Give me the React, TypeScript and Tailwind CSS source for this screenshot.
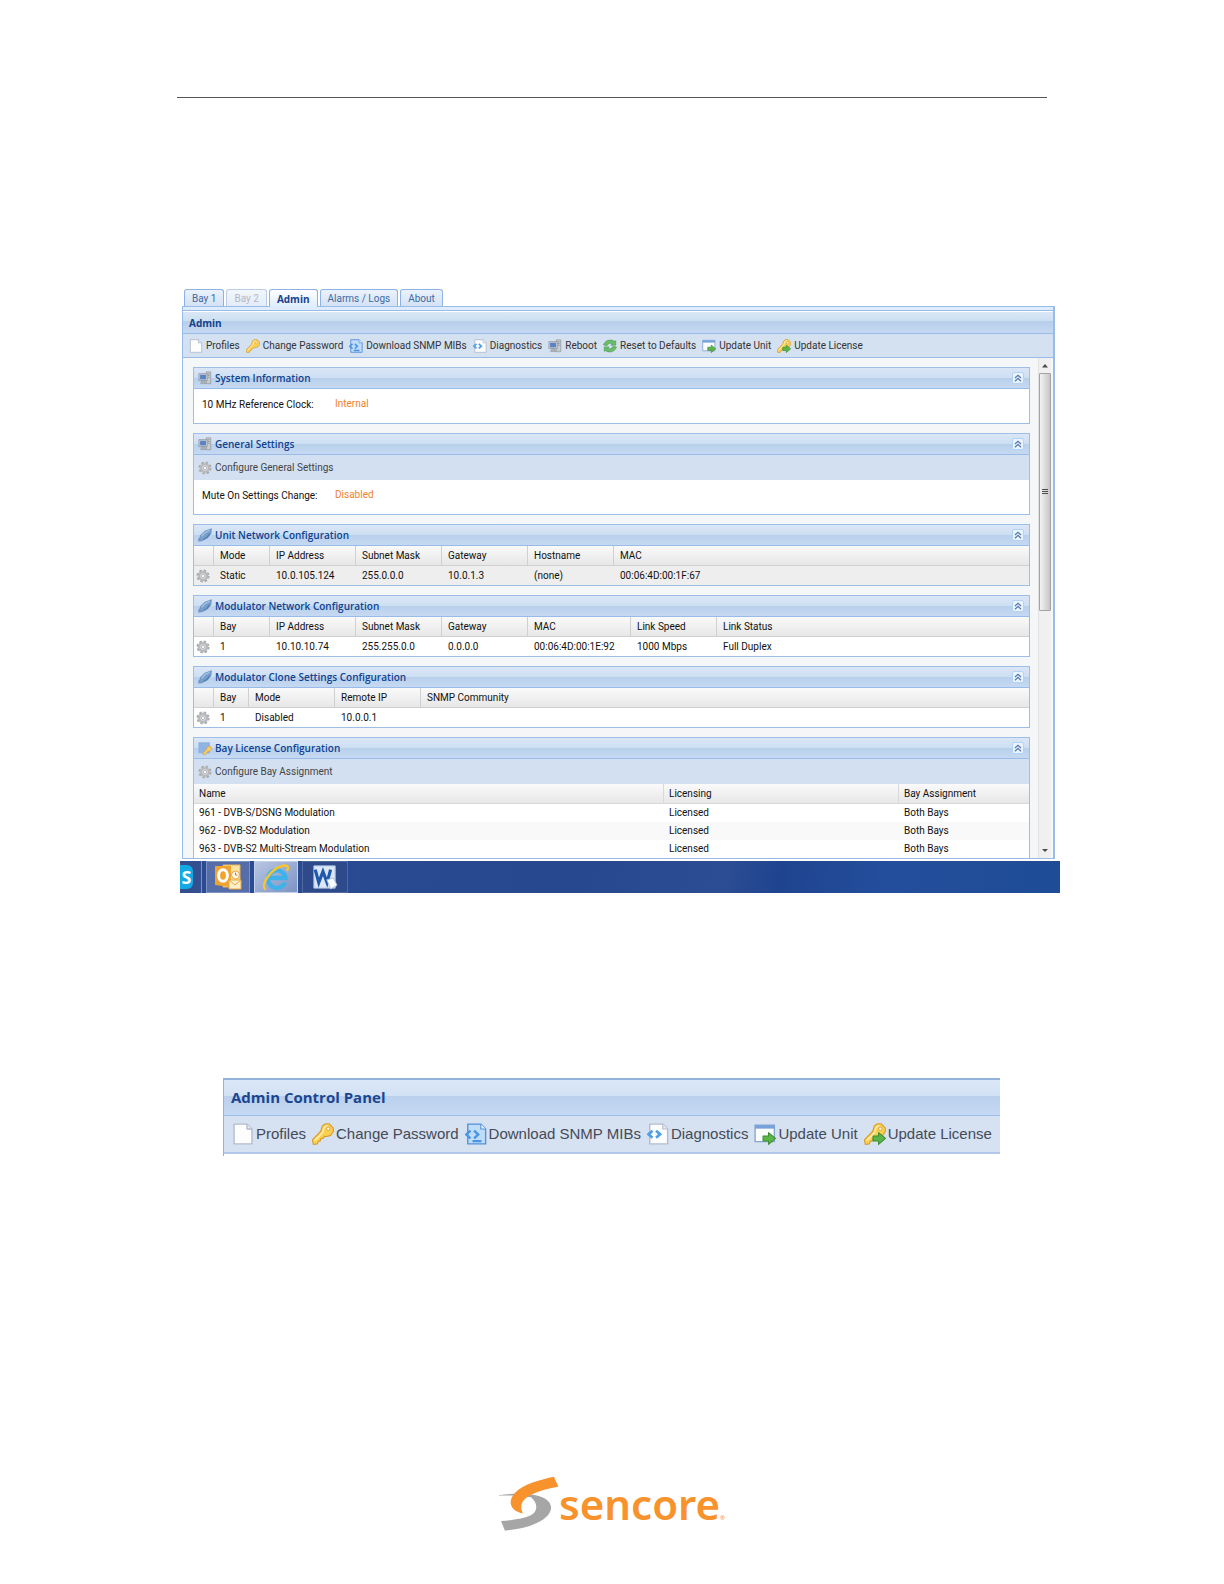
import type { ReactNode } from 'react'

type IconName =
  | 'page'
  | 'key'
  | 'download'
  | 'diagnostics'
  | 'computer'
  | 'recycle'
  | 'updateUnit'
  | 'updateLicense'
  | 'gear'
  | 'plug'
  | 'license'

type Action = { icon: IconName; label: string }

const TABS = [
  { label: 'Bay 1', state: 'normal' },
  { label: 'Bay 2', state: 'disabled' },
  { label: 'Admin', state: 'active' },
  { label: 'Alarms / Logs', state: 'normal' },
  { label: 'About', state: 'normal' },
] as const

const TOOLBAR: Action[] = [
  { icon: 'page', label: 'Profiles' },
  { icon: 'key', label: 'Change Password' },
  { icon: 'download', label: 'Download SNMP MIBs' },
  { icon: 'diagnostics', label: 'Diagnostics' },
  { icon: 'computer', label: 'Reboot' },
  { icon: 'recycle', label: 'Reset to Defaults' },
  { icon: 'updateUnit', label: 'Update Unit' },
  { icon: 'updateLicense', label: 'Update License' },
]

const CONTROL_PANEL = TOOLBAR.filter((a) => a.icon !== 'computer' && a.icon !== 'recycle')

const LICENSES = [
  '961 - DVB-S/DSNG Modulation',
  '962 - DVB-S2 Modulation',
  '963 - DVB-S2 Multi-Stream Modulation',
]

const KEY = (
  <g>
    <path
      d="M7.400 2.400 9.800.5h2.600l3.100 3.300v2.400l-2 2.800-2.800.8-1.500-.2L8 11.200l-1.600.2-.4 1.600-1.400.4-.8 1.800-2.800.4L.3 12.200 6.400 6z"
      fill="#fbcf50"
      stroke="#d99a2b"
      strokeWidth=".8"
      strokeLinejoin="round"
    />
    <path d="m1.800 13 6-6.200 1-3.600 2.400-1.400" fill="none" stroke="#fdeeb0" strokeWidth="1.100" />
    <circle cx="11.800" cy="4.200" r="1.300" fill="#fff7de" stroke="#d99a2b" strokeWidth=".6" />
  </g>
)

const ARROW = (
  <path
    d="M6.6 9.4h4V7l5 4.2-5 4.3v-2.4h-4z"
    fill="#5cb548"
    stroke="#3f8f35"
    strokeWidth=".8"
    strokeLinejoin="round"
  />
)

const ICONS: Record<IconName, ReactNode> = {
  page: (
    <g stroke="#b3bccd" strokeWidth="1" strokeLinejoin="round">
      <path d="M1.500.8h9.400L14.500 4.400v10.800h-13z" fill="#fdfdfd" />
      <path d="M10.900.8v3.600h3.600" fill="#e6e9ef" />
    </g>
  ),
  key: KEY,
  download: (
    <g>
      <path d="M2 .8h9.500l3.500 3.600v10.800H2z" fill="#bfdcf9" stroke="#5590d8" strokeLinejoin="round" />
      <path d="M11.500.8v3.600H15" fill="#e6f2fd" stroke="#5590d8" strokeWidth=".8" />
      <path d="M4 5.600.9 8.400 4 11.200M6.600 5.600l3 2.800-3 2.800M5.500 13.200H12" fill="none" stroke="#4a94e6" strokeWidth="1.700" />
    </g>
  ),
  diagnostics: (
    <g>
      <path d="M2 .8h9.500l3.500 3.600v10.800H2z" fill="#fcfdfe" stroke="#b3bccd" strokeLinejoin="round" />
      <path d="M11.500.8v3.600H15" fill="#e6e9ef" stroke="#b3bccd" strokeWidth=".8" />
      <path d="M4 5.600 1.100 8.200 4 10.800M6.600 5.600l2.900 2.600-2.900 2.600" fill="none" stroke="#4f9fe8" strokeWidth="2" />
    </g>
  ),
  computer: (
    <g>
      <path d="M9.5 1h5v13.500h-5z" fill="#c9ccd0" stroke="#8d939b" strokeWidth=".8" />
      <path d="M11 3.200h2.200M11 5.200h2.200M11 7.200h2.200" stroke="#6d747d" strokeWidth=".7" />
      <path d="M1 3h9.500v8H1z" fill="#c5cad2" stroke="#8d939b" strokeWidth=".8" />
      <path d="M2.400 4.400h6.700v5.100H2.400z" fill="#5a82c4" />
      <path d="M4.500 11h3l1.400 3.400H3z" fill="#aeb3ba" stroke="#858b94" strokeWidth=".6" />
    </g>
  ),
  recycle: (
    <g fill="#6bbd6a" stroke="#3f8f45" strokeWidth=".6" strokeLinejoin="round">
      <path d="M.6 6.800C1.800 3 5 1 8.800 1.200c1.800 0 3 .6 4 1.500L14.600 2v5H9l1.800-1.600C8 4 5.800 5 4.600 7.600z" />
      <path d="M15.400 9.200c-1.200 3.800-4.400 5.800-8.200 5.600-1.800 0-3-.6-4-1.500L1.400 14V9H7l-1.800 1.600c2.800 1.400 5 .4 6.200-2.200z" />
    </g>
  ),
  updateUnit: (
    <g>
      <path d="M.8 1.500h14v12H.8z" fill="#fbfcfe" stroke="#86a6d2" />
      <path d="M.8 1.500h14v2.600H.8z" fill="#76a2dc" />
      {ARROW}
    </g>
  ),
  updateLicense: (
    <g>
      {KEY}
      {ARROW}
    </g>
  ),
  gear: (
    <g>
      <circle cx="8" cy="8" r="6.300" fill="#d4d5d7" stroke="#a9abaf" strokeWidth="2.400" strokeDasharray="2.700 2.250" />
      <circle cx="8" cy="8" r="4.400" fill="#dfe0e2" stroke="#b7b9bc" strokeWidth="2.600" />
      <circle cx="8" cy="8" r="1.900" fill="#f6f6f6" stroke="#9da0a4" strokeWidth=".7" />
    </g>
  ),
  plug: (
    <g strokeLinejoin="round">
      <path d="M.6 15.200 1 12l3 .4.8 1.800z" fill="#8ba6c9" stroke="#6a88b0" strokeWidth=".6" />
      <path d="M1.400 13 3 8.200l4.400-4.400L15.400.8l-.6 5.600-3.800 5-6 3-2.600.2z" fill="#779fce" stroke="#6388b8" strokeWidth=".7" />
      <path d="M4.200 9.600 8 5.200l5.400-2.600" fill="none" stroke="#a3c3e6" strokeWidth="1.500" />
      <path d="m6.200 13 4.200-2.600 3-4" fill="none" stroke="#5479a8" strokeWidth="1.200" />
    </g>
  ),
  license: (
    <g>
      <path d="M1 2h12v11.500H1z" fill="#8fb4e4" stroke="#86aadc" strokeWidth=".8" />
      <path d="m10.600 6.400 3.600-.4 1.400 3.400-2.600 2.600-1.600-.2-3.200 3.800-2.400-.2.2-2.400 4-3.600z" fill="#f8cf62" stroke="#cf9f43" strokeWidth=".8" />
    </g>
  ),
}

function Icon({ name, className = 'size-[14px]' }: { name: IconName; className?: string }) {
  return (
    <svg viewBox="0 0 16 16" aria-hidden className={`shrink-0 ${className}`}>
      {ICONS[name]}
    </svg>
  )
}

function Section({
  icon,
  title,
  action,
  clipped,
  children,
}: {
  icon: IconName
  title: string
  action?: string
  clipped?: boolean
  children: ReactNode
}) {
  return (
    <section className={`border border-[#9dbfe6] bg-white ${clipped ? 'border-b-0' : ''}`}>
      <header className="flex h-[21px] items-center gap-[3px] border-b border-[#99bbe8] bg-[linear-gradient(#dbe6f6_0%,#cddff3_48%,#b8cfeb_50%,#c6d9f2_100%)] pr-[5px] pl-1">
        <Icon name={icon} />
        <h2 className="flex-1 font-['Open_Sans',sans-serif] font-semibold text-[#0d4391]">{title}</h2>
        <button
          type="button"
          aria-label={`Collapse ${title}`}
          className="grid size-3 place-items-center rounded-[2px] border border-[#b3d3f3] bg-[#e9f4fe]"
        >
          <svg viewBox="0 0 8 8" className="size-2" fill="none" stroke="#5579ad" strokeWidth="1.2">
            <path d="M1 4 4 1.2 7 4M1 7.2l3-2.8 3 2.8" />
          </svg>
        </button>
      </header>
      {action && (
        <div className="flex h-[25px] items-center bg-[#d3e0f1] pl-1">
          <button type="button" className="flex items-center gap-[3px] text-[#444]">
            <Icon name="gear" />
            {action}
          </button>
        </div>
      )}
      {children}
    </section>
  )
}

function Setting({ label, value }: { label: string; value: string }) {
  return (
    <dl className="flex h-[34px] items-center pb-[2px] pl-2">
      <dt className="w-[133px]">{label}</dt>
      <dd className="pb-[2px] text-[#f0822e]">{value}</dd>
    </dl>
  )
}

function ConfigTable({
  widths,
  head,
  row,
  shaded,
}: {
  widths: string[]
  head: string[]
  row: string[]
  shaded?: boolean
}) {
  return (
    <table className="w-full table-fixed border-separate border-spacing-0 text-left">
      <colgroup>
        <col className="w-5" />
        {head.map((h, i) => (
          <col key={h} className={widths[i]} />
        ))}
      </colgroup>
      <thead>
        <tr className="h-5 bg-linear-to-b from-[#fafafa] to-[#e6e6e6]">
          <th aria-label="Configure" className="border-r border-b border-[#d0d0d0] p-0" />
          {head.map((h) => (
            <th key={h} className="border-r border-b border-[#d0d0d0] pr-0 pl-[6px] py-0 font-normal last:border-r-0">
              {h}
            </th>
          ))}
        </tr>
      </thead>
      <tbody>
        <tr className={shaded ? 'h-[19px] bg-[#eeeeee]' : 'h-[19px]'}>
          <td className="p-0 pl-[2px]">
            <button type="button" aria-label={`Configure ${row[0]}`} className="block">
              <Icon name="gear" />
            </button>
          </td>
          {row.map((cell, i) => (
            <td key={head[i]} className="py-0 pr-0 pl-[6px]">
              {cell}
            </td>
          ))}
        </tr>
      </tbody>
    </table>
  )
}

function Scrollbar() {
  return (
    <div className="mr-[2px] flex w-[13px] shrink-0 flex-col items-center border-l border-[#e2e2e2] bg-[#f0f0f0]">
      <svg viewBox="0 0 12 15" className="h-[15px] w-3 shrink-0" fill="#4a4a4a">
        <path d="M3 9.5 6 6l3 3.5z" />
      </svg>
      <div className="grid h-[238px] w-full place-items-center rounded-[1px] border border-[#a3a3a3] bg-linear-to-r from-[#f3f3f3] to-[#c6c6c6]">
        <svg viewBox="0 0 6 6" className="size-[6px]" stroke="#4d4d4d">
          <path d="M0 .5h6M0 2.5h6M0 4.5h6" />
        </svg>
      </div>
      <svg viewBox="0 0 12 15" className="mt-auto h-[15px] w-3 shrink-0" fill="#4a4a4a">
        <path d="M3 6h6L6 9z" />
      </svg>
    </div>
  )
}

function Taskbar() {
  return (
    <div className="mt-[2px] flex h-8 gap-1 bg-[linear-gradient(100deg,#2b4c94_0%,#27478e_45%,#2c4c93_62%,#1f448f_68%,#234e9b_80%,#1f4c96_100%)]">
      <div className="flex w-[22px] items-center border-r border-[#7f93c2] bg-[#344f8f]">
        <div className="flex h-6 w-[13px] items-center justify-center rounded-r-[6px] bg-[#12a9e4] font-['Open_Sans',sans-serif] text-[18px] leading-none font-bold text-white">
          S
        </div>
      </div>
      <div className="grid w-11 place-items-center border border-[#7f93c2] bg-[#556da8]">
        <svg viewBox="0 0 28 28" className="size-7">
          <path d="M9 2h17v22H9z" fill="#fbe3a4" stroke="#eab250" />
          <path d="M1 3h16v21L1 22z" fill="#f2a32b" />
          <ellipse cx="9" cy="12.500" rx="4.400" ry="5.800" fill="none" stroke="#fff" strokeWidth="3" />
          <circle cx="21.500" cy="12" r="4" fill="#fffaf0" stroke="#e8a640" />
          <path d="M21.500 9.600V12h2" fill="none" stroke="#c47a15" />
          <path d="M15 17h12v9H15z" fill="#fdf0c8" stroke="#e8a640" />
          <path d="m15 17 6 5 6-5" fill="none" stroke="#e8a640" />
        </svg>
      </div>
      <div className="grid w-11 place-items-center border border-[#c6d0e6] bg-linear-to-br from-[#b9c6e2] to-[#7d93c4]">
        <svg viewBox="0 0 28 28" className="size-7" fill="none">
          <path d="M23 19.500A8.800 8.800 0 1 1 23.600 15H8" stroke="#3fb2ea" strokeWidth="4.400" />
          <path d="M3 26C-1 21 9 6 20 3c5-1.400 7 .6 5.500 4" stroke="#f7c531" strokeWidth="2.400" strokeLinecap="round" />
        </svg>
      </div>
      <div className="grid w-[46px] place-items-center border border-[#52699f] bg-[#2f4a8b]">
        <svg viewBox="0 0 28 28" className="size-[26px]">
          <path d="M2 2h23v24H2z" fill="#dbe7f7" stroke="#a9c0e2" />
          <path d="m3.500 6 3.800 14L11.800 8l4.400 12L20 6" fill="none" stroke="#1f59ae" strokeWidth="3.400" />
          <path d="m16 17 7-2 4 8-7 4z" fill="#f7faff" stroke="#a9c0e2" />
        </svg>
      </div>
    </div>
  )
}

function AdminScreen() {
  return (
    <div className="mt-[191px] mr-[164px] ml-[180px] font-[Roboto,sans-serif] text-[10px] leading-[14px] text-[#111]">
      <div className="mr-[5px] ml-[2px]">
        <div role="tablist" className="flex gap-[2px] pl-[2px]">
          {TABS.map(({ label, state }) => (
            <button
              key={label}
              type="button"
              role="tab"
              aria-selected={state === 'active'}
              disabled={state === 'disabled'}
              className={
                state === 'active'
                  ? "relative -mb-px h-[18px] rounded-t-[3px] border border-b-0 border-[#8db2e3] bg-linear-to-b from-white to-[#deecfd] px-[7px] font-['Open_Sans',sans-serif] font-bold text-[#15428b]"
                  : state === 'disabled'
                    ? 'h-[17px] rounded-t-[3px] border border-b-0 border-[#b9cdea] bg-linear-to-b from-[#f3f7fc] to-[#e3ecf8] px-[7px] pt-[2px] text-[#b5b8c2]'
                    : 'h-[17px] rounded-t-[3px] border border-b-0 border-[#8db2e3] bg-linear-to-b from-[#eaf2fc] to-[#d3e2f5] px-[7px] pt-[2px] text-[#416aa3]'
              }
            >
              {label}
            </button>
          ))}
        </div>
        <div className="border border-r-2 border-[#99bbe8]">
          <div className="h-1 border-b border-[#99bbe8] bg-[#deecfd]" />
          <h1 className="flex h-[23px] items-center border-t border-b border-t-white border-b-[#99bbe8] bg-[linear-gradient(#dae7f5_0%,#cbdff2_43%,#b7cfeb_45%,#c5d8f2_100%)] pl-[6px] font-['Open_Sans',sans-serif] font-bold text-[#15428b]">
            Admin
          </h1>
          <div
            role="toolbar"
            className="flex h-6 items-center gap-[6px] border-b border-[#99bbe8] bg-[#d3e1f1] pl-[6px]"
          >
            {TOOLBAR.map(({ icon, label }) => (
              <button key={label} type="button" className="flex items-center gap-[3px] text-[#333]">
                <Icon name={icon} />
                {label}
              </button>
            ))}
          </div>
          <div className="flex bg-[#f5f6f8]">
            <div className="flex min-w-0 flex-1 flex-col gap-[9px] pt-[9px] pr-2 pl-[10px]">
              <Section icon="computer" title="System Information">
                <Setting label="10 MHz Reference Clock:" value="Internal" />
              </Section>
              <Section icon="computer" title="General Settings" action="Configure General Settings">
                <Setting label="Mute On Settings Change:" value="Disabled" />
              </Section>
              <Section icon="plug" title="Unit Network Configuration">
                <ConfigTable
                  widths={['w-14', 'w-[86px]', 'w-[86px]', 'w-[86px]', 'w-[86px]', '']}
                  head={['Mode', 'IP Address', 'Subnet Mask', 'Gateway', 'Hostname', 'MAC']}
                  row={['Static', '10.0.105.124', '255.0.0.0', '10.0.1.3', '(none)', '00:06:4D:00:1F:67']}
                  shaded
                />
              </Section>
              <Section icon="plug" title="Modulator Network Configuration">
                <ConfigTable
                  widths={['w-14', 'w-[86px]', 'w-[86px]', 'w-[86px]', 'w-[103px]', 'w-[86px]', '']}
                  head={['Bay', 'IP Address', 'Subnet Mask', 'Gateway', 'MAC', 'Link Speed', 'Link Status']}
                  row={['1', '10.10.10.74', '255.255.0.0', '0.0.0.0', '00:06:4D:00:1E:92', '1000 Mbps', 'Full Duplex']}
                />
              </Section>
              <Section icon="plug" title="Modulator Clone Settings Configuration">
                <ConfigTable
                  widths={['w-[35px]', 'w-[86px]', 'w-[86px]', '']}
                  head={['Bay', 'Mode', 'Remote IP', 'SNMP Community']}
                  row={['1', 'Disabled', '10.0.0.1', '']}
                />
              </Section>
              <Section icon="license" title="Bay License Configuration" action="Configure Bay Assignment" clipped>
                <table className="w-full table-fixed border-separate border-spacing-0 text-left">
                  <colgroup>
                    <col />
                    <col className="w-[235px]" />
                    <col className="w-[130px]" />
                  </colgroup>
                  <thead>
                    <tr className="h-5 bg-linear-to-b from-[#fafafa] to-[#e6e6e6]">
                      {['Name', 'Licensing', 'Bay Assignment'].map((h) => (
                        <th
                          key={h}
                          className="border-r border-b border-[#d9d9d9] px-[5px] py-0 font-normal last:border-r-0"
                        >
                          {h}
                        </th>
                      ))}
                    </tr>
                  </thead>
                  <tbody>
                    {LICENSES.map((name) => (
                      <tr key={name} className="h-[18px] even:bg-[#f9f9f9]">
                        <td className="px-[5px] py-0">{name}</td>
                        <td className="px-[5px] py-0">Licensed</td>
                        <td className="px-[5px] py-0">Both Bays</td>
                      </tr>
                    ))}
                  </tbody>
                </table>
              </Section>
            </div>
            <Scrollbar />
          </div>
        </div>
      </div>
      <Taskbar />
    </div>
  )
}

function ControlPanel() {
  return (
    <div className="mt-[185px] mr-[224px] ml-[223px] border-t-2 border-l border-[#93b1da] pb-[2px]">
      <h2 className="flex h-9 items-center border-b border-[#9fc0ea] bg-[linear-gradient(#dbe7f6_0%,#d2e2f5_45%,#bad0ed_47%,#c6d9f3_100%)] pl-[7px] font-['Open_Sans',sans-serif] text-[15px] font-bold text-[#1b4590]">
        Admin Control Panel
      </h2>
      <div
        role="toolbar"
        className="flex h-[38px] items-center gap-[6px] border-b-2 border-[#b3c8ea] bg-[#d6e1f1] pl-2 font-['Liberation_Sans',sans-serif] text-[15px] text-[#444b57]"
      >
        {CONTROL_PANEL.map(({ icon, label }) => (
          <button key={label} type="button" className="flex items-center gap-[2px] whitespace-nowrap">
            <Icon name={icon} className="size-[22px]" />
            {label}
          </button>
        ))}
      </div>
    </div>
  )
}

function Logo() {
  return (
    <footer className="mt-[320px] flex items-center justify-center">
      <svg viewBox="38 34 180 168" className="h-14 w-[60px]" aria-hidden>
        <path
          d="M38 92C60 88 95 85 130 89c45 4 70 24 63 48-11 35-73 55-137 61l-12-29c36-3 81-7 98-23 14-16 8-34-8-48l-14-2C90 92 60 92 38 93z"
          fill="#a6a6a6"
        />
        <path
          d="M203 36C165 44 110 58 86 84c-24 26-14 56 24 62-10-18-6-38 14-50 22-14 56-24 92-30z"
          fill="#f7922d"
        />
      </svg>
      <span className="font-['Noto_Sans',sans-serif] text-[42px] leading-[56px] font-semibold text-[#f7922d]">
        sencore
      </span>
      <span className="mt-7 text-[6px] leading-none text-[#f7922d]">®</span>
    </footer>
  )
}

export default function App() {
  return (
    <main className="min-h-screen bg-white pt-[97px] pb-[50px]">
      <hr className="mx-[177px] mb-0 border-t border-[#555]" />
      <AdminScreen />
      <ControlPanel />
      <Logo />
    </main>
  )
}
